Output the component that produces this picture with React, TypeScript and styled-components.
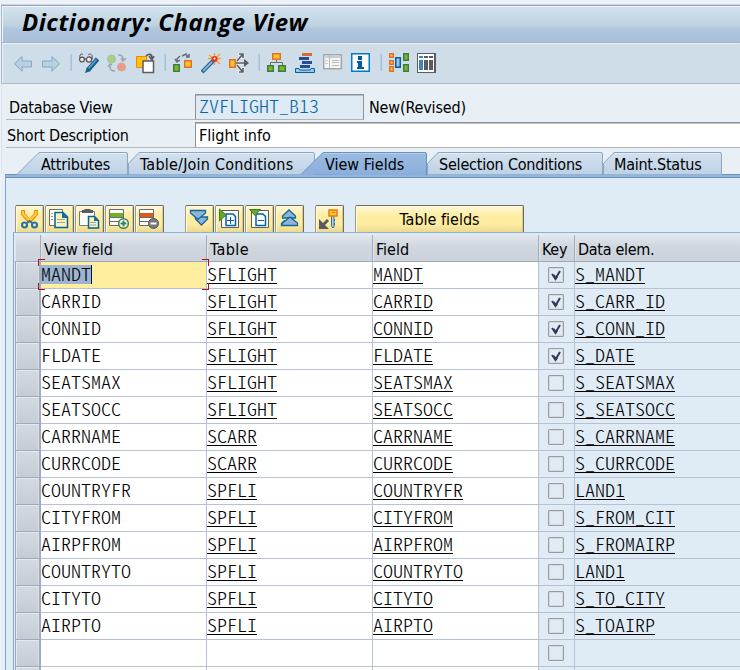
import React from 'react';
import styled, { createGlobalStyle } from 'styled-components';

const Global = createGlobalStyle`
  *, *::before, *::after { box-sizing: border-box; }
  html, body { margin: 0; padding: 0; }
`;

const Window = styled.div`
  width: 740px;
  height: 670px;
  overflow: hidden;
  display: flex;
  flex-direction: column;
  padding: 4px 0 0 1px;
  background: #edf1f8;
  color: #000;
  font: 16px/20px 'DejaVu Sans Condensed', 'DejaVu Sans', sans-serif;
  font-stretch: condensed;
  font-variant-ligatures: none;
`;

const Spaced = styled.span<{ $ls?: number }>`
  letter-spacing: ${p => p.$ls ?? -0.3}px;
  white-space: pre;
`;

const TitleBar = styled.header`
  flex: none;
  height: 39px;
  border-top: 1px solid #cdd4e1;
  border-left: 1px solid #a3b3c9;
  border-bottom: 1px solid #9eb5cd;
  box-shadow: inset 0 1px #9aa8be, inset 0 2px #eef4fa, inset 1px 0 #eef4fa;
  background: linear-gradient(#d3e2ef 2px, #bfd3e0 20px, #afc6de 24px, #aac1d9 37px);
  padding: 3px 0 0 20px;
`;

const Title = styled.h1`
  margin: 0;
  font-family: 'Open Sans', 'Noto Sans', sans-serif;
  font-size: 24px;
  line-height: 28px;
  font-weight: 700;
  font-stretch: normal;
  font-style: italic;
  letter-spacing: 0.5px;
  white-space: nowrap;
`;

const AppToolbar = styled.nav`
  flex: none;
  height: 41px;
  display: flex;
  gap: 8px;
  padding: 10px 0 0 11px;
  border-left: 1px solid #a3b3c9;
  border-bottom: 1px solid #a9bacd;
  box-shadow: inset 0 1px #eaf2f8, inset 1px 0 #eaf2f8;
  background: #cfdde8;
`;

const Separator = styled.i`
  width: 2px;
  height: 17px;
  margin: 1px -1px 0 1px;
  background: linear-gradient(90deg, #b9cfe6 50%, #a3c1e0 50%);
`;

const Form = styled.section`
  flex: none;
  height: 68px;
  padding: 10px 0 0 4px;
  background: #e8eff5;
  border-left: 1px solid #dbe2ed;
  display: flex;
  flex-direction: column;
  gap: 2px;
`;
const FormRow = styled.div`
  display: flex;
  height: 26px;
`;
const FormLabel = styled.label<{ $indent: number }>`
  width: 189px;
  height: 26px;
  padding: 4px 0 0 ${p => p.$indent}px;
  border-bottom: 1px solid #b4b8bb;
`;
const ValueBox = styled.div<{ $readonly?: boolean }>`
  width: ${p => (p.$readonly ? '169px' : 'auto')};
  flex: ${p => (p.$readonly ? 'none' : 1)};
  border: 1px solid #8e9399;
  border-right-width: ${p => (p.$readonly ? 1 : 0)}px;
  border-bottom-color: #b0b4b8;
  box-shadow: inset 0 1px #b9bdc1;
  background: ${p => (p.$readonly ? '#deeaf4' : '#fff')};
  padding: ${p => (p.$readonly ? 2 : 3)}px 0 0 3px;
`;
const Status = styled.span`
  padding: 4px 0 0 5px;
`;

/* Half-width Latin forms: every character is 10px wide */
const Mono = styled.span`
  display: inline-block;
  font-family: 'Noto Sans CJK KR', 'Liberation Mono', monospace;
  font-feature-settings: 'hwid' 1;
  font-stretch: normal;
  font-weight: 300;
  font-size: 20px;
  line-height: 18px;
  height: 18px;
  transform: scaleY(0.9);
  transform-origin: 0 50%;
  white-space: pre;
`;
const IdText = styled(Mono)`
  color: #0b65a0;
`;

const TabStrip = styled.div`
  flex: none;
  height: 22px;
  display: flex;
  padding-left: 15px;
  background: #e8eff5;
  border-left: 1px solid #dbe2ed;
`;
const Tab = styled.div<{ $w: number; $pad: number; $pull?: number; $active?: boolean }>`
  position: relative;
  z-index: ${p => (p.$active ? 1 : 0)};
  flex: none;
  width: ${p => p.$w}px;
  height: 23px;
  margin-left: ${p => -(p.$pull ?? 0)}px;
  padding: 3px 0 0 ${p => p.$pad}px;
`;
const TabShape = styled.svg`
  position: absolute;
  inset: 0;
  overflow: visible;
`;
const TabText = styled(Spaced)`
  position: relative;
`;

const Panel = styled.main`
  flex: 1;
  min-height: 0;
  margin-left: 4px;
  border-left: 1px solid #7fa2ca;
  border-top: 1px solid #6c93be;
  background: #dfebf5;
  box-shadow: -3px 0 #e8eff5;
`;
const PanelBand = styled.div`
  height: 3px;
  background: #93b5dd;
  border-bottom: 1px solid #6c93be;
`;
const GridToolbar = styled.div`
  display: flex;
  height: 54px;
  padding: 27px 0 0 9px;
  gap: 1px;
`;
const Gap = styled.i<{ $w: number }>`
  width: ${p => p.$w}px;
`;
const Button = styled.button<{ $wide?: boolean }>`
  flex: none;
  width: ${p => (p.$wide ? 169 : 29)}px;
  height: 27px;
  padding: ${p => (p.$wide ? 2 : 0)}px 0 0;
  border: 1px solid #6f6b5b;
  border-left-color: #a09a80;
  border-bottom: 0;
  border-radius: 2px 2px 0 0;
  background: linear-gradient(#fff7d6, #feeda0 40%, #feeda0 70%, #ead98f);
  box-shadow: inset 1px 1px #fffbe6, inset -1px 0 #d9c98a;
  font: inherit;
  color: #000;
  svg { display: block; margin: -1px 0 0 -1px; }
`;

const Grid = styled.div`
  margin-left: 7px;
  border-top: 1px solid #8fb0cd;
  border-left: 1px solid #8aa9c8;
  padding: 2px 0 0 1px;
`;
const columns = '26px 166px 166px 166px 36px 1fr';
const HeadRow = styled.div`
  display: grid;
  grid-template-columns: ${columns};
  height: 27px;
  border-bottom: 1px solid #a1a9b5;
  background: linear-gradient(#e3e8ec, #cfd6de 45%, #cdd3dc);
`;
const HeadCell = styled.div`
  border-right: 1px solid #a1abba;
  box-shadow: inset 1px 0 #dfe5eb;
  padding: 5px 0 0 3px;
  &:nth-child(6) { border-right: 0; }
`;
const Row = styled.div`
  display: grid;
  grid-template-columns: ${columns};
  height: 27px;
`;
const Selector = styled.div`
  border: 1px solid #a1a9b9;
  border-width: 0 2px 1px 1px;
  border-right-color: #9fabbe;
  background: linear-gradient(#d3dae1, #c6ccd5);
  box-shadow: inset 1px 1px #e4e9ed, inset -1px 0 #dbe0e6;
`;
const Cell = styled.div<{ $tone?: 'plain' | 'blue' | 'current' }>`
  position: relative;
  border-right: 1px solid #b6c1d3;
  border-bottom: 1px solid #b6c1d3;
  background: ${p => (p.$tone === 'blue' ? '#dfebf5' : p.$tone === 'current' ? '#ffee9f' : '#fff')};
  padding: 3px 0 0 0;
  &:last-child { border-right: 0; }
`;
const LinkText = styled.span`
  display: inline-block;
  height: 19px;
  border-bottom: 1px solid #000;
`;
const Selection = styled.span`
  display: inline-block;
  height: 19px;
  background: #9cb5d1;
  border-right: 1px solid #001040;
`;
const Corner = styled.i<{ $v: 'top' | 'bottom'; $h: 'left' | 'right' }>`
  position: absolute;
  z-index: 2;
  width: 7px;
  height: 7px;
  ${p => p.$v}: ${p => (p.$v === 'top' ? -3 : -2)}px;
  ${p => p.$h}: -3px;
  border: 0 solid #b20f1c;
  border-${p => p.$v}-width: 1px;
  border-${p => p.$h}-width: 1px;
`;
const CheckCell = styled(Cell)`
  display: flex;
  padding: 4px 0 0 9px;
`;
const CheckBox = styled.span`
  width: 16px;
  height: 16px;
  margin-top: 1px;
  border: 1px solid #999da1;
  border-radius: 1px;
  background: #e1ebf4;
  box-shadow: inset 0 0 0 1px #d2dae2;
  svg { display: block; }
`;

const BLUE = '#00639c';
const GREY = '#5a5c60';

const Icon = ({ children }: { children: React.ReactNode }) => (
  <svg width="20" height="21" viewBox="0 0 20 21" fill="none">{children}</svg>
);
const ButtonIcon = ({ children }: { children: React.ReactNode }) => (
  <svg width="28" height="27" viewBox="0 0 28 27" fill="none">{children}</svg>
);
const Square = ({ x, y, w = 7, h = 7, green }: { x: number; y: number; w?: number; h?: number; green?: boolean }) => (
  <rect x={x + 0.75} y={y + 0.75} width={w - 1.5} height={h - 1.5} strokeWidth="1.5"
    fill={green ? '#7fb922' : '#ffc526'} stroke={green ? '#3c7c48' : '#e0702c'} />
);

const toolbarIcons: (React.ReactNode | null)[] = [
  <path d="M1.5 10.7 9 3.5V8h9.5v6H9v4.2Z" fill="#b9cfe2" stroke="#7aabc6" />,
  <path d="M18.5 10.7 11 3.5V8H1.5v6H11v4.2Z" fill="#b9cfe2" stroke="#7aabc6" />,
  null,
  <>
    <path d="M1 5C0 1 3 0 4 2M13 5c1-4-2-5-4-3" stroke="#555" />
    <circle cx="3" cy="6.5" r="2.4" fill="#e8edf1" stroke="#555" strokeWidth="1.3" />
    <circle cx="10" cy="6.5" r="2.6" fill="#e8edf1" stroke="#555" strokeWidth="1.3" />
    <path d="M5 6h3M12 6l2-1" stroke="#555" />
    <path d="m18.500 6-9 10.500" stroke="#145f88" strokeWidth="4.500" />
    <path d="m17.500 6.500-8 9" stroke="#5b9ec8" strokeWidth="1.800" />
    <path d="m8 14 4 4-6 2Z" fill="#145f88" />
  </>,
  <>
    <circle cx="4.5" cy="6" r="4" fill="#a8ce8a" stroke="#9fc39b" />
    <circle cx="14.5" cy="14" r="4" fill="#eb9b86" stroke="#dda293" />
    <path d="M11 2c4 0 5 1 5 5m-2-2 2 3 3-3M3 13c0 4 1 5 5 5m-3-6-2-1-2 3" stroke="#a3a5a8" strokeWidth="1.5" />
  </>,
  <>
    <path d="M1.5 3.5h10v11h-10Z" fill="#ffc20e" stroke="#f18a00" />
    <path d="M11 3c3-3 6-2 6 2m-3-2 3 4 2-4" stroke={GREY} strokeWidth="1.6" />
    <path d="M8 8h10.5v11.5H8Z" fill="#fff" stroke={GREY} strokeWidth="1.5" />
  </>,
  null,
  <>
    <Square x={0} y={11} w={7} h={8} green />
    <Square x={11} y={7} w={8} h={8} />
    <path d="M4 8V6l3-3M9 3l4-2 2 3M2 6l2 3 3-2M13 4h3V1" stroke="#6b6d70" strokeWidth="1.5" />
  </>,
  <>
    <path d="M13.5 0v12M8 2l11 9M19 1 8 11M7 5.5h13" stroke="#f2a02c" strokeWidth="1.3" />
    <path d="M1 19 12 8" stroke="#1c6794" strokeWidth="4" />
    <path d="m2 18 9-9" stroke="#87b4d8" strokeWidth="1.8" />
    <circle cx="13.5" cy="6" r="3" fill="#e33636" />
    <circle cx="13.5" cy="5.5" r="1" fill="#fff" />
  </>,
  <>
    <Square x={0} y={6} w={7} h={9} />
    <path d="M7 10h10M8 8l5-6M8 12l5 6M9 1h5v5M9 19h5v-5" stroke="#ecf2f7" strokeWidth="3" />
    <path d="M7 10h10M8 8l5-6M8 12l5 6M10 1h4v4M10 19h4v-4" stroke={GREY} strokeWidth="1.6" />
    <path d="m15 6 5 4-5 4Z" fill={GREY} />
  </>,
  null,
  <>
    <path d="M9.5 7v3M3.5 12V9.500h12V12" stroke="#6b6d70" />
    <Square x={5} y={0} w={9} h={7} />
    <Square x={0} y={12} green />
    <Square x={11} y={12} w={8} green />
  </>,
  <>
    <path fill="#e0682c" d="M7 0h10v3H7Z" />
    <path fill="#254d92" d="M4 4h10v3H4ZM7 8h10v3H7ZM5 12h10v3H5Z" />
    <path d="M.5 15.500H4L5 17h10l1-1.500h3.500v4H.5Z" fill="#9cc4e3" stroke={BLUE} />
  </>,
  <>
    <path d="M.7 1.700h17.600v14H.7Z" fill="#f5f5f5" stroke="#a5a5a5" strokeWidth="1.5" />
    <path d="M1.500 4h16" stroke="#bed1e4" strokeWidth="2" />
    <path d="M6.500 2v13M2.500 7.500h2M2.500 10.500h2M9 7.500h7M9 9.500h7M9 12.500h7" stroke="#b9b9b9" />
  </>,
  <>
    <path d="M.75.75h17.500v17.500H.75Z" fill="#fff" stroke="#007ac2" strokeWidth="1.500" />
    <path fill="#005c9c" d="M7 3h4v4H7ZM6 8h5v6h2v2H6v-2h1v-4H6Z" />
  </>,
  null,
  <>
    <Square x={0} y={0} w={5} h={5} />
    <Square x={0} y={7} w={5} h={5} />
    <Square x={0} y={13} w={5} h={6} />
    <path d="M6.750 4.750h4.500v9.500h-4.500Z" fill="#9fc0df" stroke={BLUE} strokeWidth="1.500" />
    <Square x={14} y={0} w={6} h={8} green />
    <Square x={14} y={11} w={6} h={8} green />
  </>,
  <>
    <path fill={GREY} d="M0 0h19v20H0Z" />
    <path fill="#fff" d="M1 1h16v18H1Z" />
    <path fill="#4284b1" d="M2 3h4v2H2ZM2 7h4v10H2Z" />
    <path fill={GREY} d="M7 3h4v2H7ZM12 3h4v2h-4ZM7 7h4v10H7ZM12 7h4v10h-4Z" />
  </>,
];

const TableGlyph = ({ color }: { color: string }) => (
  <>
    <path d="M4.500 4.500h14v16h-14Z" fill="#fff" stroke="#696b6d" />
    <path d="M5 16.500h13" stroke="#696b6d" />
    <path d="M5 8h13v4H5Z" fill={color} />
    <path d="M5 12.500h13" stroke="#696b6d" />
  </>
);
const NodePage = ({ plus }: { plus?: boolean }) => (
  <>
    <path d="M6.500 5.500h17v17h-17Z" fill="#fff" stroke={GREY} />
    <path d="M11 9h7l2.500 2.500V20.500H11Z" fill="#fff" stroke={BLUE} strokeWidth="1.500" />
    <path d={plus ? 'M12 15.500h7M15.500 12v7' : 'M13 15.500h6'} stroke={BLUE} />
  </>
);

const icons = {
  cut: (
    <>
      <path d="M8 5v4l7 8M21 5v4l-7 8" stroke="#e88b18" strokeWidth="4" />
      <path d="M8 6v3l7 7M21 6v3l-7 7" stroke="#ffcc32" strokeWidth="2.200" />
      <circle cx="9.500" cy="20" r="2.500" stroke="#2874a3" strokeWidth="2.200" />
      <circle cx="19.500" cy="20" r="2.500" stroke="#2874a3" strokeWidth="2.200" />
      <path d="m12 18 2.500-2 2.500 2" stroke="#2874a3" strokeWidth="2" />
    </>
  ),
  copy: (
    <>
      <path d="M4.500 4.500h13v16h-13Z" fill="#fff" stroke="#696b6d" />
      <path d="M6 8.500h2M6 11.500h2M6 14.500h2" stroke="#999" />
      <path d="M10 7.500h8l4.500 4.500v10.500H10Z" fill="#fff2b2" stroke={BLUE} strokeWidth="1.500" />
      <path d="M17 7v6h6Z" fill="#1b6ba3" />
      <path d="M12 14.500h8M12 17.500h8" stroke="#88aac0" />
    </>
  ),
  paste: (
    <>
      <path d="M4.500 6.500h15v14h-15Z" fill="#fff" stroke="#77797c" />
      <path d="M7 8V5h2l1-1h5l1 1h2v3Z" fill={GREY} />
      <path d="M13.500 11.500h6l4 4v7.500h-10Z" fill="#fff2b2" stroke={BLUE} strokeWidth="1.500" />
      <path d="M19 11v5h5Z" fill="#1b6ba3" />
      <path d="M15 17.500h6M15 20h6" stroke="#88aac0" />
    </>
  ),
  insert: (
    <>
      <TableGlyph color="#72b31f" />
      <circle cx="18.500" cy="18.500" r="4.800" fill="#fff" stroke="#3c8050" strokeWidth="1.500" />
      <path d="M15.500 18.500h6M18.500 15.500v6" stroke="#3c8050" strokeWidth="2" />
    </>
  ),
  remove: (
    <>
      <TableGlyph color="#df5a16" />
      <circle cx="18.500" cy="18.500" r="5" fill="#77797c" stroke={GREY} />
      <path d="M15.500 18.500h6" stroke="#fff" strokeWidth="2" />
    </>
  ),
  down: (
    <g fill="#8db3d5" stroke="#16669b" strokeWidth="1.300">
      <path d="M10.500 12h12v2l-6 6-6-6Z" />
      <path d="M5.500 5.500h15V8L13 14.500 5.500 8Z" />
    </g>
  ),
  up: (
    <g fill="#8db3d5" stroke="#16669b" strokeWidth="1.300">
      <path d="M7.500 13v-2l6.500-6 6.500 6v2Z" />
      <path d="M6.500 20.500v-2l3-3M6.500 20.500h16v-2.500l-7.500-6-7.500 6Z" />
    </g>
  ),
  expand: (
    <>
      <NodePage plus />
      <path d="m4.500 4 6.500 6-6.500 6Z" fill="#6aa820" stroke="#3b7c2c" />
    </>
  ),
  collapse: (
    <>
      <NodePage />
      <path d="M4.500 4.500h11l-5.500 6Z" fill="#6aa820" stroke="#3b7c2c" />
    </>
  ),
  key: (
    <>
      <path d="M16.500 10h2.500v12l-1 1-1.500-1.500Z" fill="#b5cfe5" stroke="#2874a3" />
      <path d="M19.500 14v2M19.500 18v2" stroke="#2874a3" />
      <path d="M14 5h8v6h-8Z" fill="#ffc526" stroke="#e77a1a" strokeWidth="1.500" />
      <path d="M17 7.500h3" stroke="#e77a1a" />
      <path d="m13 15-5 5" stroke={GREY} strokeWidth="3" />
      <path d="M4 14v10h10Z" fill={GREY} />
    </>
  ),
};

const tools: (keyof typeof icons | number)[] = [
  'cut', 'copy', 'paste', 'insert', 'remove', 19, 'down', 'expand', 'collapse', 'up', 9, 'key', 9,
];

interface TabDef { text: string; w: number; pad: number; ls: number; pull?: number; slant?: boolean; active?: boolean }
const tabs: TabDef[] = [
  { text: 'Attributes', w: 111, pad: 24, ls: -0.2, slant: true },
  { text: 'Table/Join Conditions', w: 187, pad: 12, ls: 0.22 },
  { text: 'View Fields', w: 126, pad: 24, ls: 0, pull: 14, slant: true, active: true },
  { text: 'Selection Conditions', w: 176, pad: 12, ls: -0.2 },
  { text: 'Maint.Status', w: 119, pad: 11, ls: -0.25 },
];

const headings: [string, number][] = [
  ['View field', -0.1], ['Table', 0.4], ['Field', 0], ['Key', -0.3], ['Data elem.', -0.3],
];

const rows: [string, string, string, boolean, string][] = [
  ['MANDT', 'SFLIGHT', 'MANDT', true, 'S_MANDT'],
  ['CARRID', 'SFLIGHT', 'CARRID', true, 'S_CARR_ID'],
  ['CONNID', 'SFLIGHT', 'CONNID', true, 'S_CONN_ID'],
  ['FLDATE', 'SFLIGHT', 'FLDATE', true, 'S_DATE'],
  ['SEATSMAX', 'SFLIGHT', 'SEATSMAX', false, 'S_SEATSMAX'],
  ['SEATSOCC', 'SFLIGHT', 'SEATSOCC', false, 'S_SEATSOCC'],
  ['CARRNAME', 'SCARR', 'CARRNAME', false, 'S_CARRNAME'],
  ['CURRCODE', 'SCARR', 'CURRCODE', false, 'S_CURRCODE'],
  ['COUNTRYFR', 'SPFLI', 'COUNTRYFR', false, 'LAND1'],
  ['CITYFROM', 'SPFLI', 'CITYFROM', false, 'S_FROM_CIT'],
  ['AIRPFROM', 'SPFLI', 'AIRPFROM', false, 'S_FROMAIRP'],
  ['COUNTRYTO', 'SPFLI', 'COUNTRYTO', false, 'LAND1'],
  ['CITYTO', 'SPFLI', 'CITYTO', false, 'S_TO_CITY'],
  ['AIRPTO', 'SPFLI', 'AIRPTO', false, 'S_TOAIRP'],
  ['', '', '', false, ''],
  ['', '', '', false, ''],
];

const Link = ({ text }: { text: string }) => (text ? <LinkText><Mono>{text}</Mono></LinkText> : null);

const TabItem = ({ tab }: { tab: TabDef }) => {
  const w = tab.w;
  const edge = tab.slant ? 'M0 22.500 21 1.500Q22 .5 23 .5' : 'M.5 22.500V11.500L10 1.500Q11 .5 12 .5';
  return (
    <Tab $w={w} $pad={tab.pad} $pull={tab.pull} $active={tab.active}>
      <TabShape width={w} height="23">
        <defs>
          <linearGradient id={`tab${w}`} x2="0" y2="1">
            <stop stopColor={tab.active ? '#9bbce2' : '#d3e1ee'} />
            <stop offset="1" stopColor={tab.active ? '#8aaedb' : '#bdd1e6'} />
          </linearGradient>
        </defs>
        <path d={`${edge}H${w - 2}Q${w - 0.5} .5 ${w - 0.5} 2V${tab.active ? 23.5 : 22.5}`}
          fill={`url(#tab${w})`} stroke={tab.active ? '#6c93be' : '#8ba7c4'} />
        <path d={`M${tab.slant ? 23 : 12} 1.500H${w - 2}`} stroke={tab.active ? '#b3cdea' : '#e6eff7'} />
      </TabShape>
      <TabText $ls={tab.ls}>{tab.text}</TabText>
    </Tab>
  );
};

export default function App() {
  return (
    <Window>
      <Global />
      <TitleBar><Title>Dictionary: Change View</Title></TitleBar>
      <AppToolbar>
        {toolbarIcons.map((icon, i) => (icon ? <Icon key={i}>{icon}</Icon> : <Separator key={i} />))}
      </AppToolbar>
      <Form>
        <FormRow>
          <FormLabel $indent={3}><Spaced>Database View</Spaced></FormLabel>
          <ValueBox $readonly><IdText>ZVFLIGHT_B13</IdText></ValueBox>
          <Status><Spaced $ls={-0.15}>New(Revised)</Spaced></Status>
        </FormRow>
        <FormRow>
          <FormLabel $indent={1}><Spaced $ls={-0.2}>Short Description</Spaced></FormLabel>
          <ValueBox><Spaced $ls={0}>Flight info</Spaced></ValueBox>
        </FormRow>
      </Form>
      <TabStrip>{tabs.map(t => <TabItem key={t.text} tab={t} />)}</TabStrip>
      <Panel>
        <PanelBand />
        <GridToolbar>
          {tools.map((t, i) =>
            typeof t === 'number'
              ? <Gap key={i} $w={t} />
              : <Button key={i}><ButtonIcon>{icons[t]}</ButtonIcon></Button>)}
          <Button $wide><Spaced $ls={0}>Table fields</Spaced></Button>
        </GridToolbar>
        <Grid>
          <HeadRow>
            <HeadCell />
            {headings.map(([h, ls]) => (
              <HeadCell key={h}><Spaced $ls={ls}>{h}</Spaced></HeadCell>
            ))}
          </HeadRow>
          {rows.map(([view, table, field, key, elem], i) => (
            <Row key={i}>
              <Selector />
              <Cell $tone={i === 0 ? 'current' : 'plain'}>
                {i === 0 ? (
                  <>
                    <Selection><Mono>{view}</Mono></Selection>
                    <Corner $v="top" $h="left" /><Corner $v="top" $h="right" />
                    <Corner $v="bottom" $h="left" /><Corner $v="bottom" $h="right" />
                  </>
                ) : <Mono>{view}</Mono>}
              </Cell>
              <Cell><Link text={table} /></Cell>
              <Cell><Link text={field} /></Cell>
              <CheckCell $tone="blue">
                <CheckBox>
                  {key && (
                    <svg width="14" height="14" viewBox="0 0 14 14" fill="none">
                      <path d="m3 6 3.500 4.500L11 3" stroke="#303a5c" strokeWidth="2" />
                      <path d="m4.500 7 2 3.500 1.500-2" stroke="#303a5c" strokeWidth="2.500" />
                    </svg>
                  )}
                </CheckBox>
              </CheckCell>
              <Cell $tone="blue"><Link text={elem} /></Cell>
            </Row>
          ))}
        </Grid>
      </Panel>
    </Window>
  );
}
